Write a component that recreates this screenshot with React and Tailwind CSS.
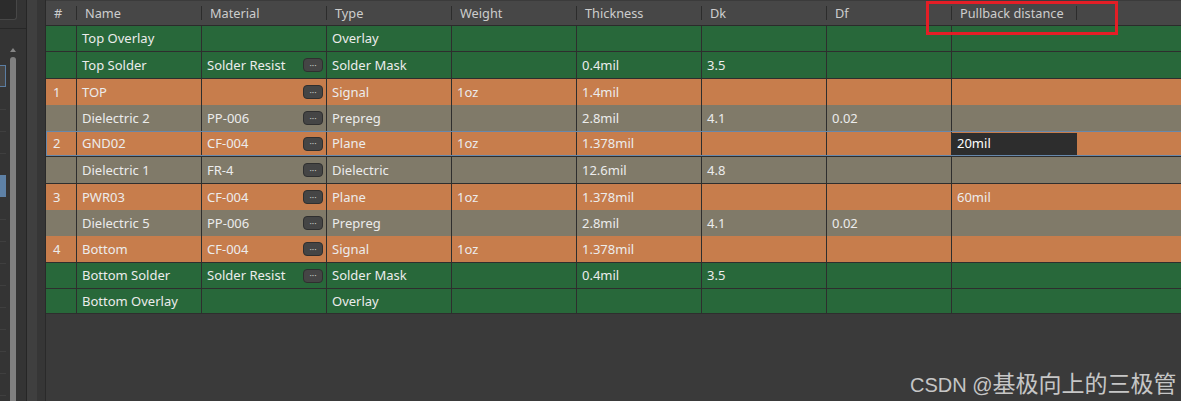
import React from "react";

const GREEN = "bg-[#28683a]";
const ORANGE = "bg-[#c77d4c]";
const GRAY = "bg-[#807a69]";

const headers = ["#", "Name", "Material", "Type", "Weight", "Thickness", "Dk", "Df", "Pullback distance"];

const rows = [
  { bg: GREEN, h: "h-[26px]", line: true, c: ["", "Top Overlay", "", "Overlay", "", "", "", "", ""], btn: false },
  { bg: GREEN, h: "h-[27px]", line: true, c: ["", "Top Solder", "Solder Resist", "Solder Mask", "", "0.4mil", "3.5", "", ""], btn: true },
  { bg: ORANGE, h: "h-[26px]", line: false, c: ["1", "TOP", "", "Signal", "1oz", "1.4mil", "", "", ""], btn: true },
  { bg: GRAY, h: "h-[26px]", line: false, c: ["", "Dielectric 2", "PP-006", "Prepreg", "", "2.8mil", "4.1", "0.02", ""], btn: true },
  { bg: ORANGE, h: "h-[26px]", line: true, sel: true, c: ["2", "GND02", "CF-004", "Plane", "1oz", "1.378mil", "", "", "20mil"], btn: true },
  { bg: GRAY, h: "h-[27px]", line: true, c: ["", "Dielectric 1", "FR-4", "Dielectric", "", "12.6mil", "4.8", "", ""], btn: true },
  { bg: ORANGE, h: "h-[26px]", line: false, c: ["3", "PWR03", "CF-004", "Plane", "1oz", "1.378mil", "", "", "60mil"], btn: true },
  { bg: GRAY, h: "h-[26px]", line: false, c: ["", "Dielectric 5", "PP-006", "Prepreg", "", "2.8mil", "4.1", "0.02", ""], btn: true },
  { bg: ORANGE, h: "h-[27px]", line: true, c: ["4", "Bottom", "CF-004", "Signal", "1oz", "1.378mil", "", "", ""], btn: true },
  { bg: GREEN, h: "h-[26px]", line: true, c: ["", "Bottom Solder", "Solder Resist", "Solder Mask", "", "0.4mil", "3.5", "", ""], btn: true },
  { bg: GREEN, h: "h-[25px]", line: true, c: ["", "Bottom Overlay", "", "Overlay", "", "", "", "", ""], btn: false },
];

// marks on the cut-off panel at the far left (y positions from panel top)
const panelMarks = [109, 131, 153, 219, 241, 263, 285, 307, 329, 351, 373, 395];

const DotsButton = () => (
  <span className="flex h-[14px] w-[20px] items-center justify-center rounded-[4px] border border-[#2f2f2f] bg-[#454545] text-[9px] leading-none text-[#c4c4c4]">
    ···
  </span>
);

const LeftStrip = () => (
  <div className="flex h-full w-[46px] shrink-0">
    <div className="flex w-[26px] flex-col bg-[#343434]">
      <div className="h-[20px] w-[17px] rounded-br-[3px] border-b border-r border-[#474747] bg-[#2c2c2c]" />
      <div className="h-[8px]" />
      <div className="h-px w-full bg-[#272727]" />
      <div className="flex flex-1">
        <div className="relative w-[10px]">
          <div className="absolute left-0 top-[36px] h-[22px] w-[6px] border border-l-0 border-[#5b7ea3] bg-[#464646]" />
          <div className="absolute left-0 top-[146px] h-[22px] w-[6px] bg-[#5e81a6]" />
          {panelMarks.map((y) => (
            <div key={y} className="absolute left-0 h-px w-[6px] bg-[#3f3f3f]" style={{ top: y - 29 }} />
          ))}
        </div>
        <div className="flex w-[6px] flex-col items-center">
          <div className="mt-[19px] h-0 w-0 border-x-[3px] border-b-[4px] border-x-transparent border-b-[#858585]" />
          <div className="mt-[5px] w-[6px] flex-1 rounded-t-[3px] bg-[#808080]" />
        </div>
        <div className="w-[10px]" />
      </div>
    </div>
    <div className="w-px bg-[#262626]" />
    <div className="w-[10px] bg-[#3f3f3f]" />
    <div className="w-[8px] bg-[#363636]" />
    <div className="w-px bg-[#2a2a2a]" />
  </div>
);

const colW = (i) => (i === 0 ? "w-[31px]" : "w-[125px]");

const Header = () => (
  <div className="flex h-[26px] shrink-0 border-b border-t border-b-[#2b2b2b] border-t-[#3b3b3b] bg-[#474747] text-[12.75px] text-[#cdcdcd]">
    {headers.map((h, i) => (
      <div key={h} className={`${colW(i)} flex shrink-0 items-center justify-between`}>
        <span className="pl-[8px] pt-[2px]">{h}</span>
        <span className="h-[14px] w-px bg-[#2c2c2c]" />
      </div>
    ))}
    <div className="flex-1" />
  </div>
);

const Row = ({ r }) => (
  <div className={`relative flex shrink-0 ${r.h} ${r.bg} ${r.line ? "border-b border-[#2e2e2e]" : ""} text-[13px] text-[#ececec]`}>
    {r.c.map((txt, i) => {
      if (i === 8) {
        return (
          <div key={i} className="flex flex-1 items-center">
            {r.sel ? (
              <div className="my-[2px] flex h-[22px] w-[125px] items-center bg-[#2d2d2d] pl-[5px] pt-px text-white">{txt}</div>
            ) : (
              <span className="pl-[5px] pt-px">{txt}</span>
            )}
          </div>
        );
      }
      return (
        <div
          key={i}
          className={`${colW(i)} flex shrink-0 items-center justify-between border-r border-[#2e2e2e] ${i === 0 ? "pl-[7px]" : "pl-[5px]"} pr-[3px]`}
        >
          <span className="whitespace-nowrap pt-px">{txt}</span>
          {i === 2 && r.btn ? <DotsButton /> : null}
        </div>
      );
    })}
    {r.sel ? <div className="pointer-events-none absolute inset-0 border-y border-l border-[#6788ab]" /> : null}
  </div>
);

export default function App() {
  return (
    <div
      className="relative flex h-[401px] w-[1181px] overflow-hidden bg-[#3a3a3a]"
      style={{ fontFamily: '"Noto Sans", "Open Sans", sans-serif' }}
    >
      <LeftStrip />
      <div className="flex flex-1 flex-col">
        <Header />
        {rows.map((r, i) => (
          <Row key={i} r={r} />
        ))}
        <div className="flex-1" />
      </div>

      {/* red annotation box */}
      <div className="pointer-events-none absolute left-[926px] top-[1px] h-[34px] w-[192px] border-[3px] border-[#e41e26]" />

      {/* watermark */}
      <div className="pointer-events-none absolute left-[910px] top-[365px] flex items-baseline whitespace-nowrap text-[#c6c6c6]">
        <span className="text-[20px]" style={{ fontFamily: '"Liberation Sans", Arial, sans-serif' }}>
          CSDN @
        </span>
        <span className="text-[23px]" style={{ fontFamily: '"Noto Sans CJK SC", sans-serif' }}>
          基极向上的三极管
        </span>
      </div>
    </div>
  );
}
